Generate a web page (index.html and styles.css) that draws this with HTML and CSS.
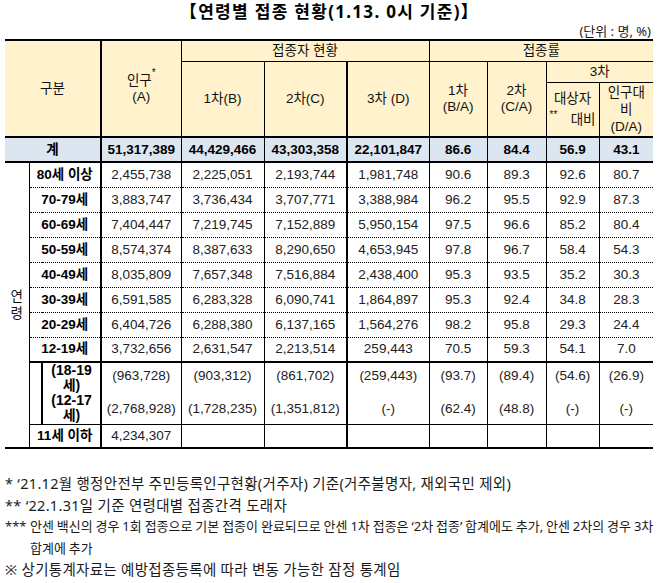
FILE: index.html
```html
<!DOCTYPE html>
<html lang="ko">
<head>
<meta charset="utf-8">
<title>연령별 접종 현황</title>
<link rel="stylesheet" href="styles.css">
</head>
<body>
<h1 class="title">【연령별 접종 현황(1.13. 0시 기준)】</h1>
<div class="unit">(단위 : 명, %)</div>
<table class="tbl">
  <colgroup>
    <col class="w24"><col class="w13"><col class="w59"><col class="w80"><col class="w83"><col class="w83"><col class="w82"><col class="w58"><col class="w59"><col class="w53"><col class="w54">
  </colgroup>
  <thead>
    <tr class="hr1">
      <th class="first" rowspan="3" colspan="3">구분</th>
      <th class="bl2" rowspan="3">인구<sup class="sup">*</sup><br>(A)</th>
      <th colspan="3">접종자 현황</th>
      <th class="last" colspan="4">접종률</th>
    </tr>
    <tr class="hr2">
      <th rowspan="2">1차(B)</th>
      <th rowspan="2">2차(C)</th>
      <th class="bl2" rowspan="2">3차 (D)</th>
      <th rowspan="2">1차<br>(B/A)</th>
      <th rowspan="2">2차<br>(C/A)</th>
      <th class="last" colspan="2">3차</th>
    </tr>
    <tr class="hr3">
      <th class="tgt"><span class="l1">대상자</span><span class="l2"><sup class="sup2">**</sup><span>대비</span></span></th>
      <th class="last ratio">인구대<br>비<br>(D/A)</th>
    </tr>
  </thead>
  <tbody>
    <tr class="total">
      <td class="first lbl" colspan="3">계</td>
      <td class="bl2">51,317,389</td>
      <td>44,429,466</td>
      <td>43,303,358</td>
      <td class="bl2">22,101,847</td>
      <td>86.6</td>
      <td>84.4</td>
      <td>56.9</td>
      <td class="last">43.1</td>
    </tr>
    <tr class="age firstage">
      <td class="first agehead" rowspan="11">연<br>령</td>
      <td class="lbl" colspan="2">80세 이상</td>
      <td class="bl2">2,455,738</td><td>2,225,051</td><td>2,193,744</td><td class="bl2">1,981,748</td><td>90.6</td><td>89.3</td><td>92.6</td><td class="last">80.7</td>
    </tr>
    <tr class="age dot">
      <td class="lbl" colspan="2">70-79세</td>
      <td class="bl2">3,883,747</td><td>3,736,434</td><td>3,707,771</td><td class="bl2">3,388,984</td><td>96.2</td><td>95.5</td><td>92.9</td><td class="last">87.3</td>
    </tr>
    <tr class="age dot">
      <td class="lbl" colspan="2">60-69세</td>
      <td class="bl2">7,404,447</td><td>7,219,745</td><td>7,152,889</td><td class="bl2">5,950,154</td><td>97.5</td><td>96.6</td><td>85.2</td><td class="last">80.4</td>
    </tr>
    <tr class="age dot">
      <td class="lbl" colspan="2">50-59세</td>
      <td class="bl2">8,574,374</td><td>8,387,633</td><td>8,290,650</td><td class="bl2">4,653,945</td><td>97.8</td><td>96.7</td><td>58.4</td><td class="last">54.3</td>
    </tr>
    <tr class="age dot">
      <td class="lbl" colspan="2">40-49세</td>
      <td class="bl2">8,035,809</td><td>7,657,348</td><td>7,516,884</td><td class="bl2">2,438,400</td><td>95.3</td><td>93.5</td><td>35.2</td><td class="last">30.3</td>
    </tr>
    <tr class="age dot">
      <td class="lbl" colspan="2">30-39세</td>
      <td class="bl2">6,591,585</td><td>6,283,328</td><td>6,090,741</td><td class="bl2">1,864,897</td><td>95.3</td><td>92.4</td><td>34.8</td><td class="last">28.3</td>
    </tr>
    <tr class="age dot">
      <td class="lbl" colspan="2">20-29세</td>
      <td class="bl2">6,404,726</td><td>6,288,380</td><td>6,137,165</td><td class="bl2">1,564,276</td><td>98.2</td><td>95.8</td><td>29.3</td><td class="last">24.4</td>
    </tr>
    <tr class="age dot">
      <td class="lbl" colspan="2">12-19세</td>
      <td class="bl2">3,732,656</td><td>2,631,547</td><td>2,213,514</td><td class="bl2">259,443</td><td>70.5</td><td>59.3</td><td>54.1</td><td class="last">7.0</td>
    </tr>
    <tr class="sub sub1">
      <td class="indent" rowspan="2"></td>
      <td class="lbl sublbl">(18-19<br>세)</td>
      <td class="bl2">(963,728)</td><td>(903,312)</td><td>(861,702)</td><td class="bl2">(259,443)</td><td>(93.7)</td><td>(89.4)</td><td>(54.6)</td><td class="last">(26.9)</td>
    </tr>
    <tr class="sub sub2">
      <td class="lbl sublbl">(12-17<br>세)</td>
      <td class="bl2">(2,768,928)</td><td>(1,728,235)</td><td>(1,351,812)</td><td class="bl2">(-)</td><td>(62.4)</td><td>(48.8)</td><td>(-)</td><td class="last">(-)</td>
    </tr>
    <tr class="age under11">
      <td class="lbl" colspan="2">11세 이하</td>
      <td class="bl2">4,234,307</td><td></td><td></td><td class="bl2"></td><td></td><td></td><td></td><td class="last"></td>
    </tr>
  </tbody>
</table>
<div class="notes">
  <p class="note">* ‘21.12월 행정안전부 주민등록인구현황(거주자) 기준(거주불명자, 재외국민 제외)</p>
  <p class="note">** ‘22.1.31일 기준 연령대별 접종간격 도래자</p>
  <p class="note note3"><span class="mark">***</span><span class="n3">안센 백신의 경우 1회 접종으로 기본 접종이 완료되므로 안센 1차 접종은 ‘2차 접종’ 합계에도 추가, 안센 2차의 경우 3차<br>합계에 추가</span></p>
  <p class="note">※ 상기통계자료는 예방접종등록에 따라 변동 가능한 잠정 통계임</p>
</div>
</body>
</html>
```
FILE: styles.css
```css
html, body {
  margin: 0;
  padding: 0;
  background: #ffffff;
}
body {
  width: 659px;
  font-family: "Noto Sans", "Noto Sans CJK KR", sans-serif;
  color: #000;
}
.title {
  margin: 0;
  font-size: 17px;
  font-weight: 700;
  line-height: 24px;
  text-align: center;
  letter-spacing: 1.3px;
}
.unit {
  font-size: 13px;
  line-height: 15px;
  text-align: right;
  padding-right: 8px;
  color: #222;
}
.tbl {
  margin-left: 5px;
  width: 648px;
  border-collapse: collapse;
  table-layout: fixed;
  font-family: "Liberation Sans", "Noto Sans CJK KR", sans-serif;
  font-size: 13.5px;
  line-height: 16px;
}
.w24 { width: 24px; }
.w13 { width: 13px; }
.w59 { width: 59px; }
.w80 { width: 80px; }
.w83 { width: 83px; }
.w82 { width: 82px; }
.w58 { width: 58px; }
.w54 { width: 54px; }
.w53 { width: 53px; }

.tbl th, .tbl td {
  padding: 0;
  text-align: center;
  vertical-align: middle;
  border: 0;
  border-left: 1px solid #000;
  border-right: 1px solid #000;
  overflow: hidden;
  white-space: nowrap;
}
.tbl th {
  background: #fff2cc;
  font-weight: 400;
  color: #111;
}
.tbl .first { border-left: none; }
.tbl .last { border-right: none; }
.tbl .bl2 { border-left: 2px solid #000; }

.hr1 { height: 21px; }
.hr1 > th { border-top: 2px solid #000; }
.hr2 { height: 21px; }
.hr2 > th { border-top: 1px solid #000; }
.hr3 { height: 55px; }
.hr3 > th { border-top: 1px solid #000; }

.sup {
  font-size: 10px;
  vertical-align: top;
  position: relative;
  top: -5px;
  line-height: 10px;
}
.tgt { padding: 0 3px; }
.tgt .l1 { display: block; line-height: 22px; }
.tgt .l2 {
  display: flex;
  justify-content: space-between;
  align-items: flex-start;
  line-height: 20px;
  padding: 0 3px 0 3px;
}
.sup2 {
  font-size: 10px;
  line-height: 10px;
  vertical-align: top;
}
.ratio { line-height: 17px; }

.total { height: 25px; }
.total > td {
  background: #dce6f1;
  font-weight: 700;
  border-top: 2px solid #000;
  border-bottom: 2px solid #000;
}
.age { height: 25px; }
.age > td { color: #222; }
.dot > td { border-top: 1px dotted #000; }
.firstage > td { border-top: 2px solid #000; }
.tbl .lbl { font-weight: 700; color: #000; }
.tbl .agehead {
  font-weight: 400;
  color: #111;
  line-height: 17px;
  border-bottom: 2px solid #000;
}
.sub { height: 31px; }
.sub > td { color: #222; }
.sub1 > td { border-top: 2px solid #000; }
.tbl .indent { border-right: 2px solid #000; }
.tbl .sublbl {
  border-left: 2px solid #000;
  font-size: 14px;
  line-height: 15px;
  white-space: normal;
  overflow: visible;
}
.sub1 > td:not(.indent):not(.sublbl) { padding-bottom: 4px; }
.sub2 > td:not(.sublbl) { padding-top: 2px; }
.under11 > td {
  border-top: 1px solid #000;
  border-bottom: 2px solid #000;
}
.under11 { height: 24px; }

.notes {
  margin-top: 24px;
  padding-left: 5px;
  color: #1a1a1a;
}
.note {
  margin: 0;
  font-size: 14.5px;
  line-height: 21.5px;
  letter-spacing: 0.3px;
  white-space: nowrap;
}
.note3 {
  display: flex;
  font-size: 13px;
  letter-spacing: 0;
}
.note3 .mark {
  width: 25px;
  flex: none;
  font-size: 13px;
}
.note3 .n3 {
  letter-spacing: 0;
  word-spacing: -0.5px;
}
```
